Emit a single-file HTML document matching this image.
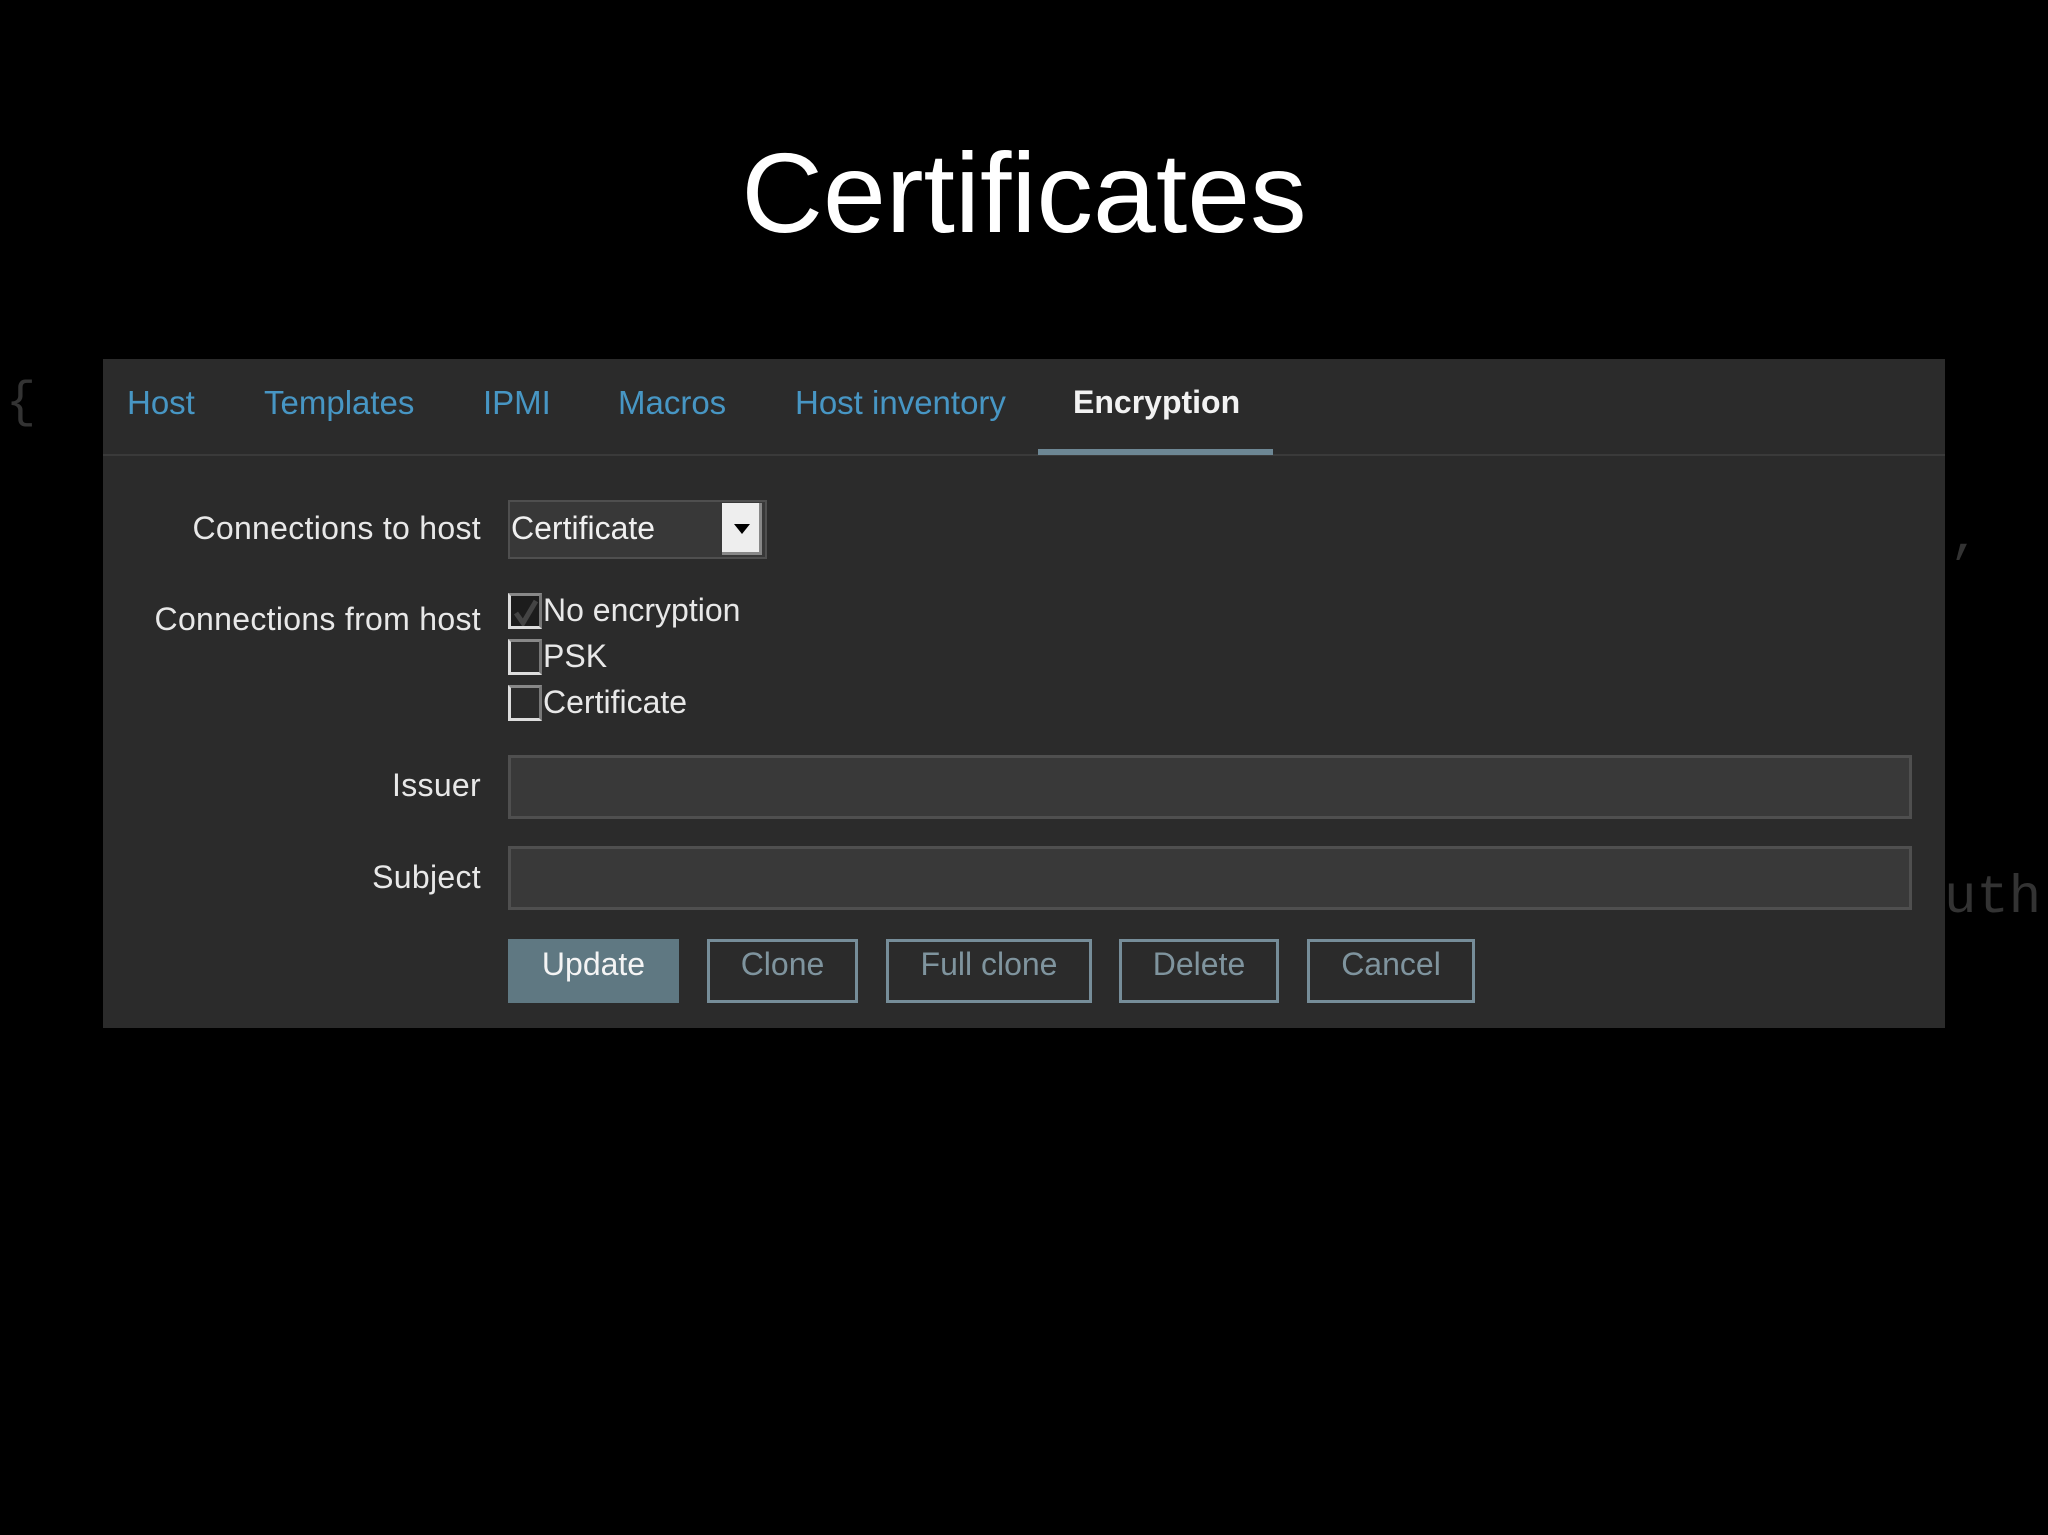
<!DOCTYPE html>
<html><head><meta charset="utf-8"><style>
body{margin:0;width:2048px;height:1535px;background:#000;overflow:hidden;position:relative;font-family:"Liberation Sans",sans-serif}
.a{position:absolute;white-space:nowrap}
.t{color:#4796c4;font-size:33px;top:384px}
.l{color:#e8e8e8;font-size:32px;right:1567px;text-align:right;letter-spacing:0.3px}
.cb{position:absolute;left:508px;width:34px;height:36px;border:3px solid #ddd;border-right-color:#777;border-top-color:#888;box-sizing:border-box;background:#2b2b2b}
.ct{color:#e8e8e8;font-size:32px;left:543px}
.in{position:absolute;left:508px;width:1404px;height:64px;background:#393939;border:3px solid #4f4f4f;box-sizing:border-box}
.b{position:absolute;top:939px;height:64px;border:3px solid #768d99;box-sizing:border-box;color:#7f949e;font-size:32px;text-align:center;line-height:44px;background:#2b2b2b}
</style></head><body>
<div class="a" style="left:0;width:2048px;text-align:center;top:128px;color:#fff;font-size:113px">Certificates</div>
<div class="a" style="left:6px;top:375px;color:#333;font-size:50px;font-family:'Liberation Mono',monospace">{</div>
<div class="a" style="left:1950px;top:510px;color:#333;font-size:50px;font-family:'Liberation Mono',monospace">,</div>
<div class="a" style="left:1944px;top:868px;color:#333;font-size:54px;font-family:'Liberation Mono',monospace">uth</div>
<div class="a" style="left:103px;top:359px;width:1842px;height:669px;background:#2b2b2b"></div>
<div class="a" style="left:103px;top:454px;width:1842px;height:2px;background:#3a3a3a"></div>
<div class="a" style="left:1038px;top:449px;width:235px;height:6px;background:#6d8794"></div>
<div class="a t" style="left:127px">Host</div>
<div class="a t" style="left:264px">Templates</div>
<div class="a t" style="left:483px">IPMI</div>
<div class="a t" style="left:618px">Macros</div>
<div class="a t" style="left:795px">Host inventory</div>
<div class="a t" style="left:1073px;color:#f2f2f2;font-weight:bold;font-size:32px">Encryption</div>
<div class="a l" style="top:510px">Connections to host</div>
<div class="a l" style="top:601px">Connections from host</div>
<div class="a l" style="top:767px">Issuer</div>
<div class="a l" style="top:859px">Subject</div>
<div class="a" style="left:508px;top:500px;width:259px;height:59px;background:#383838;border:2px solid #4f4f4f;box-sizing:border-box"></div>
<div class="a" style="left:511px;top:510px;color:#f0f0f0;font-size:32px">Certificate</div>
<div class="a" style="left:722px;top:503px;width:40px;height:52px;background:#eee;border-right:3px solid #888;border-bottom:3px solid #888;box-sizing:border-box"></div>
<svg class="a" style="left:733px;top:522px" width="18" height="14"><path d="M1 2H17L9 12Z" fill="#000"/></svg>
<div class="cb" style="top:593px;background:#1c1c1c"></div>
<svg class="a" style="left:513px;top:598px" width="26" height="28"><path d="M3 15L10 25L23 3" stroke="#444" stroke-width="5" fill="none"/></svg>
<div class="a ct" style="top:592px">No encryption</div>
<div class="cb" style="top:639px"></div>
<div class="a ct" style="top:638px">PSK</div>
<div class="cb" style="top:685px"></div>
<div class="a ct" style="top:684px">Certificate</div>
<div class="in" style="top:755px"></div>
<div class="in" style="top:846px"></div>
<div class="b" style="left:508px;width:171px;background:#5f7882;border-color:#5f7882;color:#f4f4f4">Update</div>
<div class="b" style="left:707px;width:151px">Clone</div>
<div class="b" style="left:886px;width:206px">Full clone</div>
<div class="b" style="left:1119px;width:160px">Delete</div>
<div class="b" style="left:1307px;width:168px">Cancel</div>
</body></html>
